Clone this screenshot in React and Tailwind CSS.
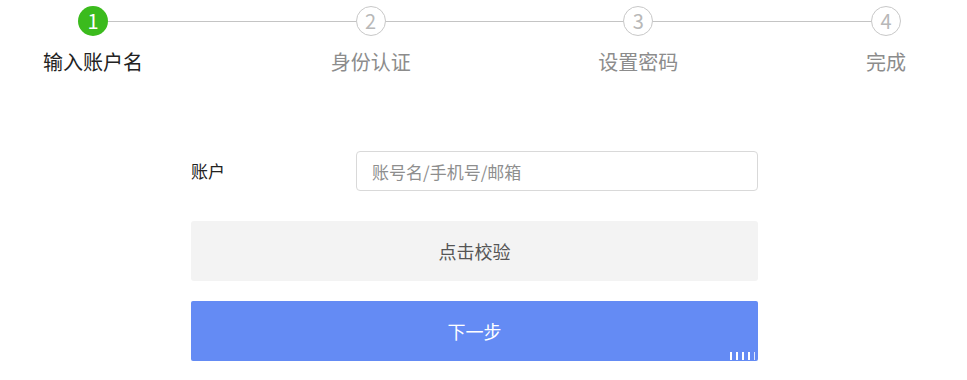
import React from "react";

const steps = [
  { n: "1", label: "输入账户名", active: true },
  { n: "2", label: "身份认证" },
  { n: "3", label: "设置密码" },
  { n: "4", label: "完成" },
];

export default function App() {
  return (
    <div
      className="w-[967px] h-[380px] bg-white overflow-hidden"
      style={{ fontFamily: '"Noto Sans CJK SC", "Noto Sans", sans-serif' }}
    >
      <div className="relative ml-[43px] mr-[61px] flex justify-between pt-[6px]">
        <div className="absolute top-[21px] left-[50px] right-[20px] h-px bg-[#c4c4c4]" />
        {steps.map((s) => (
          <div key={s.n} className="relative z-10 flex flex-col items-center">
            {s.active ? (
              <div className="flex h-[30px] w-[30px] items-center justify-center rounded-full bg-[#3bbb1d] text-[20px] leading-none text-white">
                {s.n}
              </div>
            ) : (
              <div className="flex h-[30px] w-[30px] items-center justify-center rounded-full border border-[#c8c8c8] bg-white text-[20px] leading-none text-[#b8b8b8]">
                {s.n}
              </div>
            )}
            <div
              className={
                "mt-[12px] text-[20px] leading-[28px] whitespace-nowrap " +
                (s.active ? "text-[#222]" : "text-[#8c8c8c]")
              }
            >
              {s.label}
            </div>
          </div>
        ))}
      </div>

      <div className="ml-[191px] mt-[75px] w-[567px]">
        <div className="flex items-center">
          <div className="w-[165px] text-[17px] text-[#222]">账户</div>
          <input
            className="h-[40px] flex-1 rounded-[4px] border border-[#d9d9d9] pl-[15px] text-[17px] text-[#333] outline-none placeholder:text-[#8e8e8e]"
            placeholder="账号名/手机号/邮箱"
          />
        </div>
        <button className="mt-[30px] flex h-[60px] w-full items-center justify-center rounded-[3px] bg-[#f3f3f3] text-[18px] text-[#555]">
          点击校验
        </button>
        <div className="relative mt-[20px]">
          <button className="flex h-[60px] w-full items-center justify-center rounded-[2px] bg-[#648bf4] text-[18px] text-white">
            下一步
          </button>
          <div className="absolute bottom-[1px] right-[3px] flex gap-[3.5px]">
            <div className="h-[8px] w-[2.5px] bg-white" />
            <div className="h-[8px] w-[2.5px] bg-white" />
            <div className="h-[8px] w-[2.5px] bg-white" />
            <div className="h-[8px] w-[2.5px] bg-white" />
            <div className="h-[8px] w-[1.5px] bg-[#dfe7fd]" />
          </div>
        </div>
      </div>
    </div>
  );
}
